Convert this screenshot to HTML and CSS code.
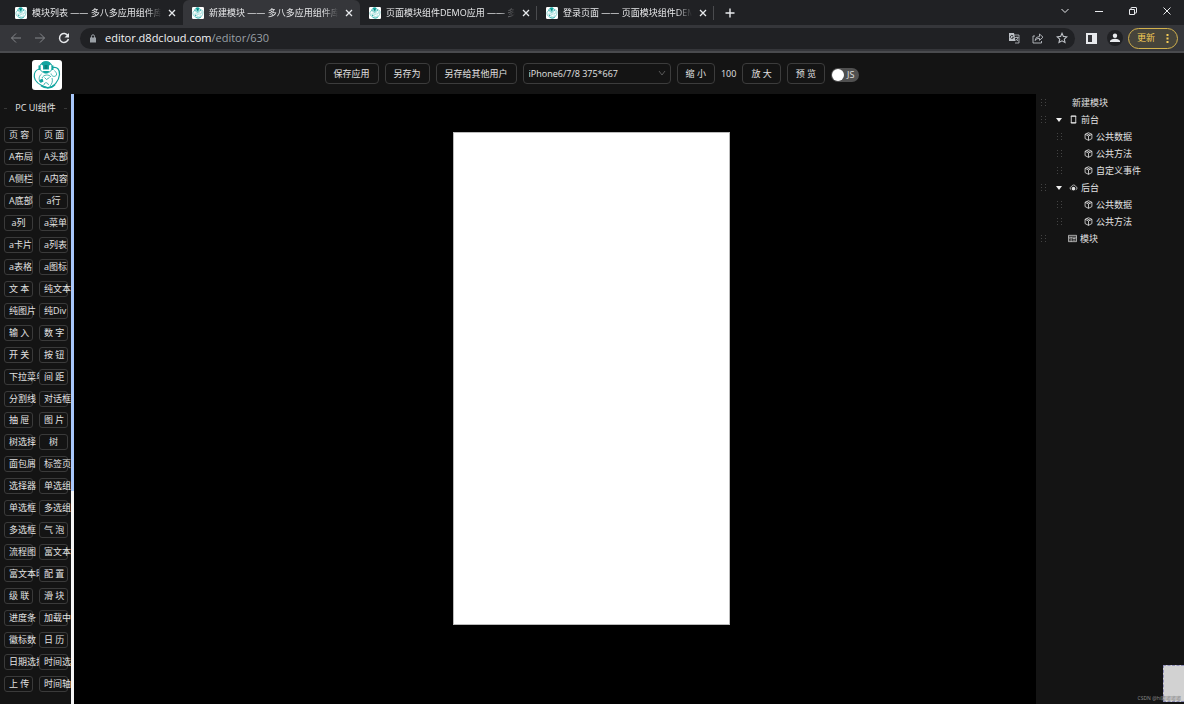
FILE: index.html
```html
<!DOCTYPE html>
<html lang="zh-CN">
<head>
<meta charset="utf-8">
<title>新建模块 —— 多八多应用组件库</title>
<link rel="stylesheet" href="styles.css">
</head>
<body>
<svg class="defs" aria-hidden="true">
  <symbol id="logo" viewBox="0 0 30 30">
    <rect width="30" height="30" rx="3" fill="#fff"/>
    <g fill="none" stroke="#12a5a0">
      <path d="M7.500 9C4 9.500 2 13 2.300 17c.5 5 6 8.500 13 10.800C22 27 27 21 27.500 14.500 28 9.500 25 6.500 21 7.500" stroke-width="1.200"/>
      <path d="M9 25.500c4 3 10 3.500 14-1" stroke-width="1.600"/>
      <path d="M9.500 14C7 16 6.500 19 8 22M19 13.500c.5 3 4 4 5.500 1.500.5-2-1-3-2-4.500M20 18c1 3 0 6-2 8M10 18c1.500-3.500 7-4 9-1" stroke-width=".8"/>
      <path d="M12 25c0-3 4-3 4.500 0M12.500 17.500l2 2 3-2" stroke-width=".8"/>
      <ellipse cx="14" cy="7.300" rx="6.300" ry="5.700" stroke-width=".9"/>
    </g>
    <path d="M9 4.500C10 .3 18 .3 19 4.500L17 5.500v4h-6v-4z" fill="#12a5a0"/>
    <path d="M6.500 5.500h2v4.500h-2zM19.500 5.500h2v4.500h-2zM10.500 11h7l-2 2.300h-3zM7.500 20l3-1.500 1 3-3 1.500z" fill="#12a5a0"/>
    <path d="M12.500 5h3v4h-3z" fill="#0a807c"/>
  </symbol>
  <symbol id="close" viewBox="0 0 8 8"><path d="M1 1l6 6M7 1L1 7" fill="none" stroke="currentColor" stroke-width="1.3"/></symbol>
  <symbol id="cube" viewBox="0 0 10 10"><path d="M5 .8l3.800 1.700v4.800L5 9.300 1.200 7.300V2.500zM1.200 2.500L5 4.500l3.800-2M5 4.500v4.800M3 1.700l3.900 2" fill="none" stroke="currentColor" stroke-width=".9"/></symbol>
  <symbol id="drag" viewBox="0 0 6 8"><path d="M0 0h1v1H0zM4 0h1v1H4zM0 3h1v1H0zM4 3h1v1H4zM0 6h1v1H0zM4 6h1v1H4z" fill="currentColor"/></symbol>
  <symbol id="caret" viewBox="0 0 6 4"><path d="M0 0h6L3 4z" fill="currentColor"/></symbol>
</svg>

<header class="browser">
  <nav class="tabs">
    <div class="tab"><svg class="favicon"><use href="#logo"/></svg><span class="tab-title">模块列表 —— 多八多应用组件库</span><button class="icon-btn" aria-label="关闭"><svg class="x"><use href="#close"/></svg></button></div>
    <div class="tab active"><svg class="favicon"><use href="#logo"/></svg><span class="tab-title">新建模块 —— 多八多应用组件库</span><button class="icon-btn" aria-label="关闭"><svg class="x"><use href="#close"/></svg></button></div>
    <div class="tab divided"><svg class="favicon"><use href="#logo"/></svg><span class="tab-title">页面模块组件DEMO应用 —— 多</span><button class="icon-btn" aria-label="关闭"><svg class="x"><use href="#close"/></svg></button></div>
    <div class="tab divided"><svg class="favicon"><use href="#logo"/></svg><span class="tab-title">登录页面 —— 页面模块组件DEM</span><button class="icon-btn" aria-label="关闭"><svg class="x"><use href="#close"/></svg></button></div>
    <button class="icon-btn new-tab" aria-label="新标签页"><svg width="10" height="10" viewBox="0 0 10 10"><path d="M5 .5v9M.5 5h9" stroke="currentColor" stroke-width="1.400"/></svg></button>
    <div class="window-controls">
      <button class="icon-btn" aria-label="搜索标签页"><svg width="10" height="10" viewBox="0 0 10 10"><path d="M1.500 3L5 6.500 8.500 3" fill="none" stroke="currentColor"/></svg></button>
      <button class="icon-btn" aria-label="最小化"><svg width="10" height="10" viewBox="0 0 10 10"><path d="M1 5.500h8" stroke="currentColor"/></svg></button>
      <button class="icon-btn" aria-label="还原"><svg width="10" height="10" viewBox="0 0 10 10"><path d="M1.500 3.500h5v5h-5zM3 3.500V2q0-.5.5-.5H8q.5 0 .5.5v4.500q0 .5-.5.500H6.500" fill="none" stroke="currentColor"/></svg></button>
      <button class="icon-btn" aria-label="关闭窗口"><svg width="10" height="10" viewBox="0 0 10 10"><path d="M1.500 1.500l7 7M8.500 1.500l-7 7" stroke="currentColor"/></svg></button>
    </div>
  </nav>
  <div class="address-bar">
    <button class="icon-btn dim" aria-label="后退"><svg width="12" height="12" viewBox="0 0 12 12"><path d="M11 6H1.500M6 1.500L1.500 6 6 10.500" fill="none" stroke="currentColor"/></svg></button>
    <button class="icon-btn dim" aria-label="前进"><svg width="12" height="12" viewBox="0 0 12 12"><path d="M1 6h9.500M6 1.500L10.500 6 6 10.500" fill="none" stroke="currentColor"/></svg></button>
    <button class="icon-btn" aria-label="刷新"><svg width="12" height="12" viewBox="0 0 12 12"><path d="M10 3.800A4.500 4.500 0 1 0 10.400 7" fill="none" stroke="currentColor" stroke-width="1.500"/><path d="M11 1v4.500H6.500z" fill="currentColor"/></svg></button>
    <div class="omnibox">
      <svg class="lock" width="8" height="9" viewBox="0 0 8 9"><path d="M1 3.500h6V8.500H1z" fill="currentColor"/><path d="M2.500 4V2.300a1.500 1.500 0 0 1 3 0V4" fill="none" stroke="currentColor"/></svg>
      <span class="url">editor.d8dcloud.com<span class="path">/editor/630</span></span>
      <button class="icon-btn soft" aria-label="翻译"><svg width="12" height="12" viewBox="0 0 12 12"><path d="M1 1h5l1.500 8H1z" fill="currentColor"/><path d="M6 3h5v8H7M7 5.500h3.500M9 4.500v1M10 5.500q-.5 2-2 3M8 7q1 1.500 2.300 2" fill="none" stroke="currentColor" stroke-width=".8"/><path d="M5.200 4A1.600 1.600 0 1 0 5.500 5.300H4" fill="none" stroke="#202124" stroke-width=".8"/></svg></button>
      <button class="icon-btn soft" aria-label="分享"><svg width="12" height="12" viewBox="0 0 12 12"><path d="M3 4H1v7h8.500V9" fill="none" stroke="currentColor" stroke-width=".9"/><path d="M3 8.500q.5-4 4.500-4V2L11 5.200 7.500 8.300V6.300Q4.500 6.300 3 8.500z" fill="none" stroke="currentColor" stroke-width=".9"/></svg></button>
      <button class="icon-btn soft" aria-label="收藏"><svg width="12" height="12" viewBox="0 0 12 12"><path d="M6 1.300l1.400 3.100 3.400.4-2.500 2.300.7 3.400-3-1.700-3 1.700.7-3.400L1.200 4.800l3.400-.4z" fill="none" stroke="currentColor" stroke-width="1.100"/></svg></button>
    </div>
    <button class="icon-btn" aria-label="侧边栏"><svg width="11" height="11" viewBox="0 0 11 11"><path d="M0 0h11v11H0z" fill="currentColor"/><path d="M2 2h4v7H2z" fill="#35363a"/></svg></button>
    <button class="icon-btn avatar" aria-label="个人资料"><svg width="10" height="10" viewBox="0 0 10 10"><circle cx="5" cy="2.700" r="2.200" fill="currentColor"/><path d="M0 9V7.800Q1.500 5.800 5 5.800t5 2V9z" fill="currentColor"/></svg></button>
    <button class="update">更新<svg width="3" height="11" viewBox="0 0 3 11"><path d="M.5 1h2v2h-2zM.5 4.500h2v2h-2zM.5 8h2v2h-2z" fill="currentColor"/></svg></button>
  </div>
</header>

<div class="app-bar">
  <svg class="logo"><use href="#logo"/></svg>
  <div class="tools">
    <button class="btn">保存应用</button>
    <button class="btn">另存为</button>
    <button class="btn">另存给其他用户</button>
    <div class="device">
      <select class="device-select" aria-label="设备尺寸"><option>iPhone6/7/8 375*667</option></select>
      <svg class="chevron" viewBox="0 0 8 6"><path d="M1 1l3 4 3-4" fill="none" stroke="currentColor" stroke-width=".8"/></svg>
    </div>
    <button class="btn">缩 小</button>
    <span class="zoom">100</span>
    <button class="btn">放 大</button>
    <button class="btn">预 览</button>
    <label class="switch"><input class="switch-input" type="checkbox">JS</label>
  </div>
</div>

<main class="workspace">
  <aside class="palette">
    <h2 class="palette-title">PC UI组件</h2>
    <div class="palette-grid">
      <button class="item">页 容</button><button class="item">页 面</button>
      <button class="item">A布局</button><button class="item">A头部</button>
      <button class="item">A侧栏</button><button class="item">A内容</button>
      <button class="item">A底部</button><button class="item">a行</button>
      <button class="item">a列</button><button class="item">a菜单</button>
      <button class="item">a卡片</button><button class="item">a列表</button>
      <button class="item">a表格</button><button class="item">a图标</button>
      <button class="item">文 本</button><button class="item">纯文本</button>
      <button class="item">纯图片</button><button class="item">纯Div</button>
      <button class="item">输 入</button><button class="item">数 字</button>
      <button class="item">开 关</button><button class="item">按 钮</button>
      <button class="item">下拉菜单</button><button class="item">间 距</button>
      <button class="item">分割线</button><button class="item">对话框</button>
      <button class="item">抽 屉</button><button class="item">图 片</button>
      <button class="item">树选择</button><button class="item">树</button>
      <button class="item">面包屑</button><button class="item">标签页</button>
      <button class="item">选择器</button><button class="item">单选组</button>
      <button class="item">单选框</button><button class="item">多选组</button>
      <button class="item">多选框</button><button class="item">气 泡</button>
      <button class="item">流程图</button><button class="item">富文本</button>
      <button class="item">富文本时</button><button class="item">配 置</button>
      <button class="item">级 联</button><button class="item">滑 块</button>
      <button class="item">进度条</button><button class="item">加载中</button>
      <button class="item">徽标数</button><button class="item">日 历</button>
      <button class="item">日期选择</button><button class="item">时间选</button>
      <button class="item">上 传</button><button class="item">时间轴</button>
    </div>
  </aside>
  <div class="scrollbar"><div class="thumb"></div></div>
  <section class="canvas"><div class="phone"></div></section>
  <aside class="outline">
    <ul class="tree">
      <li class="node root"><svg class="drag"><use href="#drag"/></svg><span>新建模块</span></li>
      <li class="node"><svg class="drag"><use href="#drag"/></svg><svg class="caret"><use href="#caret"/></svg><svg class="glyph" viewBox="0 0 10 10"><path d="M2.500 1h5v8h-5zM2 1.500h6M2 8.500h6" fill="none" stroke="currentColor"/></svg><span>前台</span></li>
      <li class="node leaf"><svg class="drag"><use href="#drag"/></svg><svg class="glyph"><use href="#cube"/></svg><span>公共数据</span></li>
      <li class="node leaf"><svg class="drag"><use href="#drag"/></svg><svg class="glyph"><use href="#cube"/></svg><span>公共方法</span></li>
      <li class="node leaf"><svg class="drag"><use href="#drag"/></svg><svg class="glyph"><use href="#cube"/></svg><span>自定义事件</span></li>
      <li class="node"><svg class="drag"><use href="#drag"/></svg><svg class="caret"><use href="#caret"/></svg><svg class="glyph" viewBox="0 0 10 10"><path d="M2.500 7.500Q.8 7 1.300 5.200 1.800 4 3 4q.5-1.800 2.200-1.800T7.500 4q1.400.2 1.400 1.700T7.500 7.500" fill="none" stroke="currentColor" stroke-width=".8"/><circle cx="5" cy="6.300" r="2" fill="currentColor"/></svg><span>后台</span></li>
      <li class="node leaf"><svg class="drag"><use href="#drag"/></svg><svg class="glyph"><use href="#cube"/></svg><span>公共数据</span></li>
      <li class="node leaf"><svg class="drag"><use href="#drag"/></svg><svg class="glyph"><use href="#cube"/></svg><span>公共方法</span></li>
      <li class="node group"><svg class="drag"><use href="#drag"/></svg><svg class="glyph" viewBox="0 0 10 10"><path d="M.5 1.500h9v7h-9zM.5 3.500h9M3.500 3.500v5M5 5h3.500M5 6.800h3.500M1.500 5h1M1.500 6.800h1" fill="none" stroke="currentColor" stroke-width=".8"/></svg><span>模块</span></li>
    </ul>
  </aside>
  <div class="floating"></div>
  <span class="watermark">CSDN @hi嘟嘟嘟嘟</span>
</main>
</body>
</html>
```

FILE: styles.css
```css
* { box-sizing: border-box; }

body {
  margin: 0;
  min-height: 100vh;
  display: flex;
  flex-direction: column;
  background: #141414;
  color: #e2e2e2;
  font: 9px/14px "Open Sans", "Noto Sans CJK SC", sans-serif;
}

button, select {
  font: inherit;
  color: inherit;
}

.defs { position: absolute; width: 0; height: 0; }

.icon-btn {
  display: flex;
  align-items: center;
  justify-content: center;
  padding: 0;
  border: 0;
  background: none;
  color: #e8eaed;
}

.browser { background: #35363a; border-bottom: 2px solid #4a4b4e; }

.tabs {
  display: flex;
  height: 25px;
  padding-left: 6px;
  background: #202124;
}

.tab {
  display: flex;
  align-items: center;
  flex: 0 1 177px;
  min-width: 0;
  gap: 5px;
  padding: 0 5px 0 9px;
  border-radius: 6px 6px 0 0;
  color: #e9eaec;
}

.tab.active { background: #35363a; }

.tab.divided {
  border-radius: 0;
  background: linear-gradient(#4a4b4e, #4a4b4e) right center / 1px 14px no-repeat;
}

.favicon { width: 12px; height: 12px; flex: none; }

.tab-title {
  flex: 1;
  overflow: hidden;
  white-space: nowrap;
  -webkit-mask-image: linear-gradient(to right, #000 88%, transparent);
  mask-image: linear-gradient(to right, #000 88%, transparent);
}

.x { width: 8px; height: 8px; margin: 0 2px; }

.new-tab { margin-left: 11px; }

.window-controls { display: flex; gap: 24px; margin-left: auto; padding: 0 12px 3px 0; }

.address-bar {
  display: flex;
  align-items: center;
  gap: 12px;
  height: 26px;
  padding: 0 6px 0 10px;
}

.dim { color: #85878b; }
.soft { color: #bdc1c6; }

.omnibox {
  display: flex;
  align-items: center;
  flex: 1;
  gap: 12px;
  height: 21px;
  margin: 0 -1px 0 -2px;
  padding: 0 7px 0 9px;
  border-radius: 11px;
  background: #202124;
}

.lock { color: #9aa0a6; }

.url {
  flex: 1;
  margin-left: -4px;
  font-size: 11px;
  color: #f1f3f4;
}

.path { color: #9aa0a6; }

.avatar {
  width: 16px;
  height: 16px;
  margin: 0 -7px 0 -2px;
  border-radius: 50%;
  background: #202124;
}

.update {
  display: flex;
  align-items: center;
  gap: 11px;
  height: 21px;
  padding: 0 8px;
  border: 1px solid #d3b24d;
  border-radius: 11px;
  background: #46443b;
  color: #f5cb57;
}

.app-bar {
  display: flex;
  align-items: center;
  height: 41px;
  background: #141414;
}

.logo { flex: none; width: 30px; height: 30px; margin: 2px 0 0 32px; }

.tools {
  display: flex;
  align-items: center;
  justify-content: center;
  flex: 1;
  gap: 6px;
  padding-right: 62px;
}

.btn {
  height: 21px;
  padding: 0 8px;
  border: 1px solid #3c3c3c;
  border-radius: 4px;
  background: #141414;
  white-space: nowrap;
}

.device { position: relative; width: 148px; }

.device-select {
  display: block;
  width: 100%;
  height: 21px;
  padding: 0 5px;
  border: 1px solid #3c3c3c;
  border-radius: 4px;
  background: #141414;
  appearance: none;
}

.chevron {
  position: absolute;
  right: 5px;
  top: 7px;
  width: 8px;
  height: 6px;
  color: #686868;
  pointer-events: none;
}

.switch {
  display: flex;
  align-items: center;
  gap: 3px;
  height: 14px;
  margin-top: 2px;
  padding: 0 5px 0 1px;
  border-radius: 7px;
  background: #505050;
}

.switch-input {
  width: 12px;
  height: 12px;
  margin: 0;
  border-radius: 50%;
  background: #fff;
  appearance: none;
}

.workspace { position: relative; display: flex; flex: 1; }

.palette {
  display: flex;
  flex-direction: column;
  width: 71px;
  padding: 7px 4px 9px;
  overflow: hidden;
}

.palette-title {
  display: flex;
  align-items: center;
  justify-content: space-between;
  margin: 0 0 9px;
  font-size: 9px;
  line-height: 14px;
  font-weight: 400;
  white-space: nowrap;
}

.palette-title::before,
.palette-title::after { content: ""; width: 3px; height: 1px; background: #383838; }

.palette-grid {
  display: grid;
  grid-template-columns: 29px 29px;
  grid-auto-rows: minmax(18px, 1fr);
  align-items: center;
  column-gap: 6px;
  flex: 1;
}

.item {
  height: 16px;
  padding: 0 4px;
  border: 1px solid #3a3a3a;
  border-radius: 3px;
  background: #141414;
  line-height: 14px;
  text-align: center;
  white-space: nowrap;
}

.scrollbar { width: 3px; background: #f4f4f4; }
.thumb { height: 65%; background: #a8c7fa; }

.canvas {
  display: flex;
  justify-content: center;
  align-items: flex-start;
  flex: 1;
  padding: 38px 0 38px 73px;
  background: #000;
}

.phone {
  width: 277px;
  aspect-ratio: 375 / 667;
  border: 1px solid #bbb;
  background: #fff;
}

.outline { width: 148px; }

.tree { margin: 0; padding: 0; list-style: none; }

.node {
  display: flex;
  align-items: center;
  gap: 3px;
  height: 17px;
  padding-left: 5px;
  white-space: nowrap;
}

.drag { width: 6px; height: 8px; margin-right: 6px; color: #444; }
.caret { width: 6px; height: 4px; margin-right: 4px; color: #f0f0f0; }
.glyph { width: 9px; height: 9px; }
.root .drag { margin-right: 22px; }
.leaf { padding-left: 21px; }
.leaf .drag { margin-right: 18px; }
.group .drag { margin-right: 18px; }

.floating {
  position: absolute;
  right: 0;
  bottom: 2px;
  width: 21px;
  height: 37px;
  border: 1px dashed #8f8fb8;
  border-right: 0;
  background: #d2d2d2;
}

.watermark {
  position: absolute;
  right: 3px;
  bottom: 1px;
  font-size: 5px;
  line-height: 10px;
  color: #8c8c8c;
}
```
